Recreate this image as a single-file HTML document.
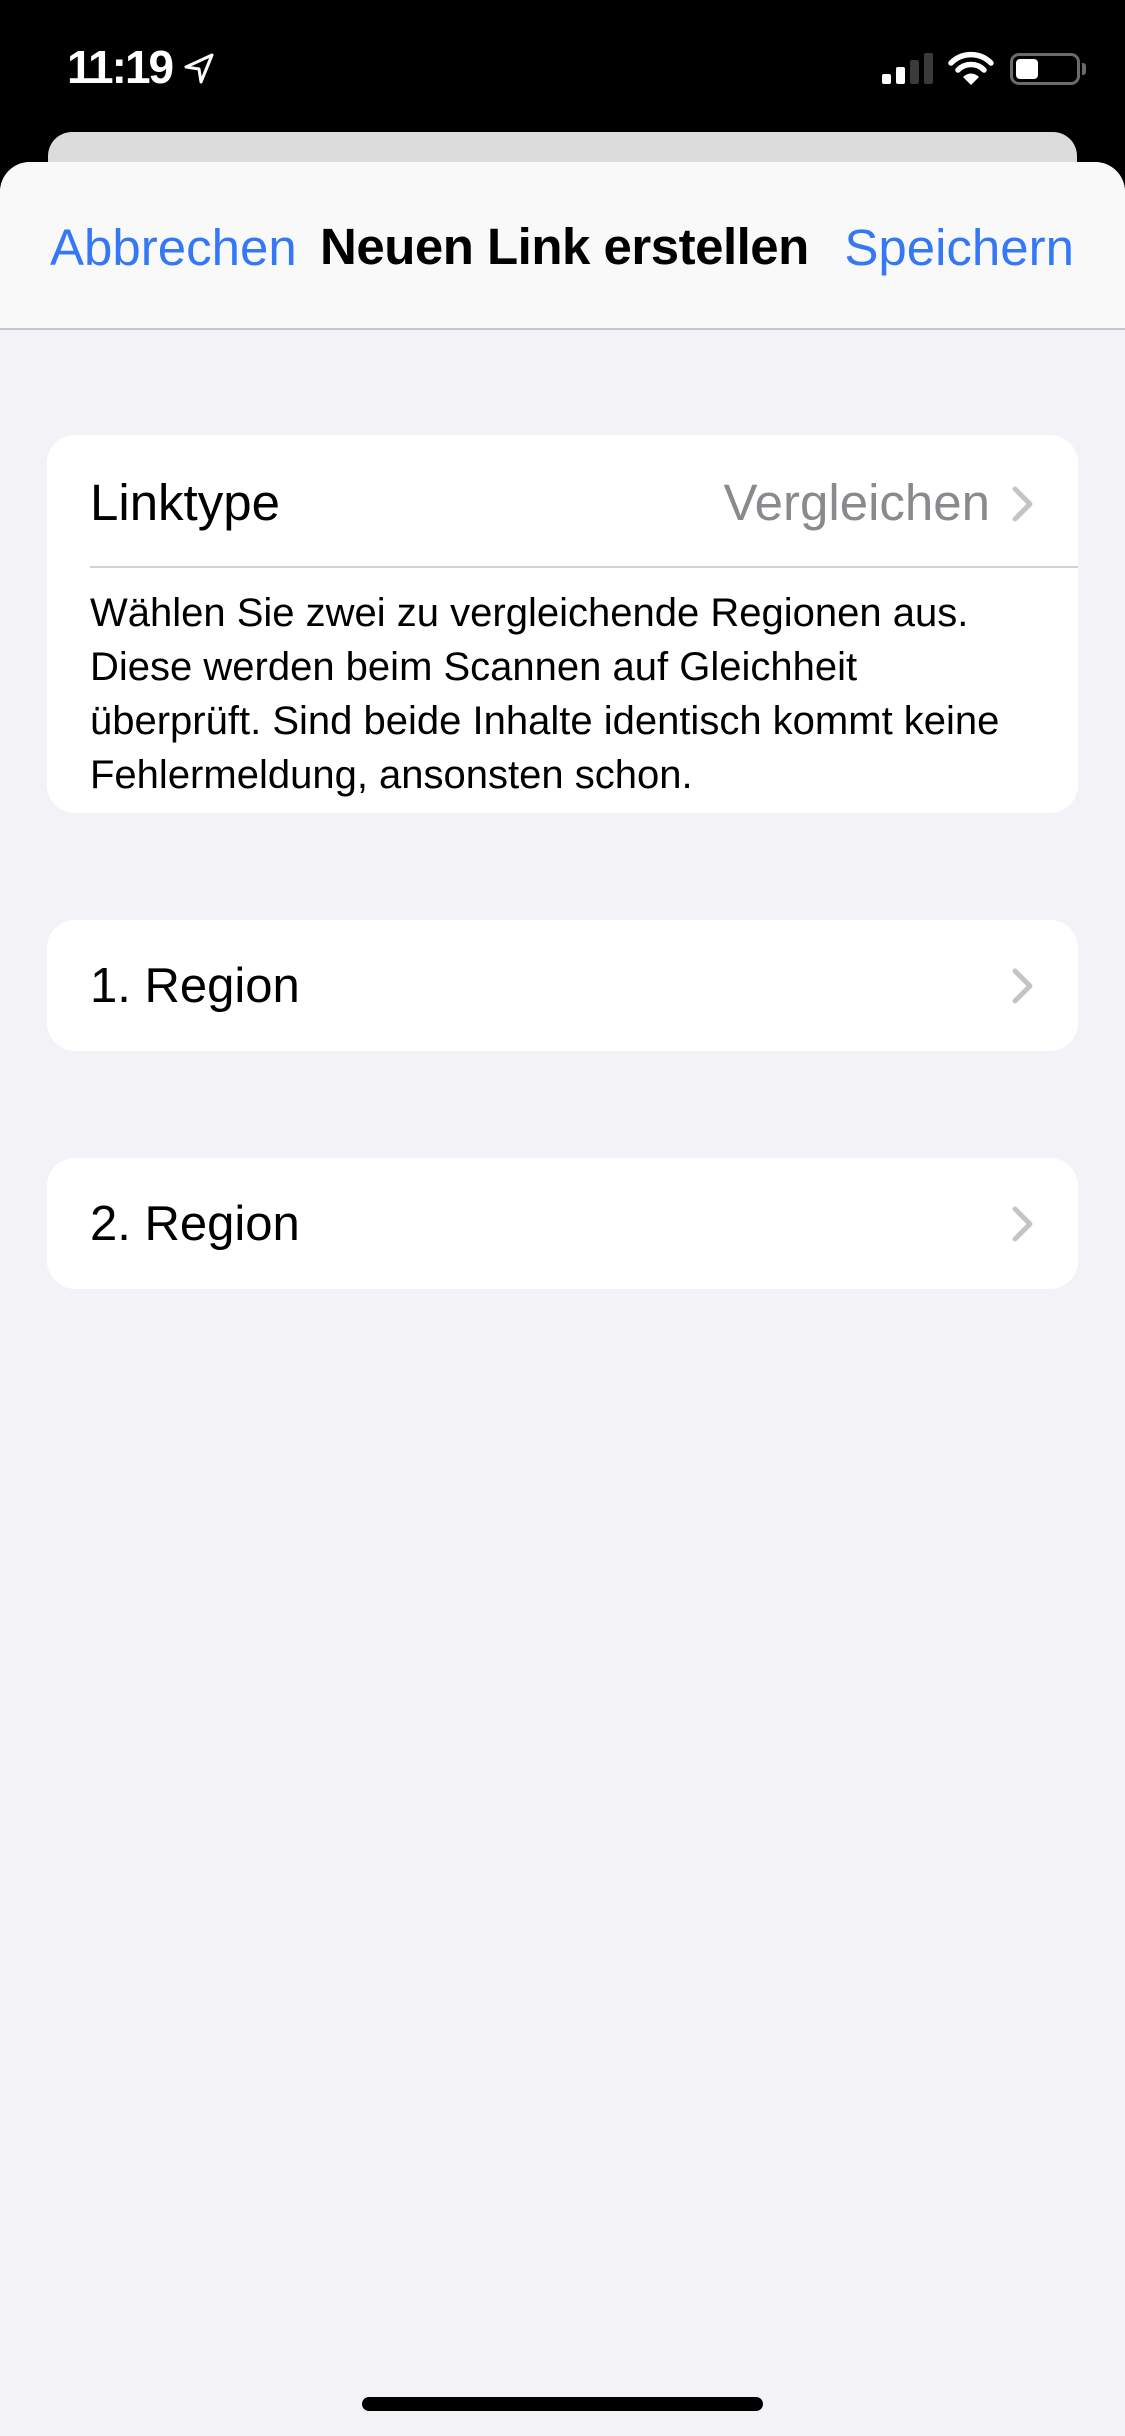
<!DOCTYPE html>
<html><head><meta charset="utf-8"><style>
*{margin:0;padding:0;box-sizing:border-box}
body{width:1125px;height:2436px;background:#000;font-family:"Liberation Sans",sans-serif;position:relative;overflow:hidden}
.abs{position:absolute}
.sheet{left:0;top:162px;width:1125px;height:2274px;background:#f2f2f7;border-radius:30px 30px 0 0;overflow:hidden}
.nav{left:0;top:0;width:1125px;height:168px;background:#f9f9f9;border-bottom:2px solid #c6c6c8}
.card{left:47px;width:1031px;background:#fff;border-radius:28px}
.t{white-space:nowrap;line-height:1}
.chev{position:absolute}
</style></head><body>
<div class="abs t" style="left:67px;top:44px;color:#fff;font-size:46px;font-weight:bold;letter-spacing:-2px">11:19</div>
<svg class="abs" style="left:182px;top:52px" width="34" height="34" viewBox="0 0 34 34"><path d="M30 3 L4 15 L17 17 L19 30 Z" fill="none" stroke="#fff" stroke-width="3" stroke-linejoin="round"/></svg>
<div class="abs" style="left:882px;top:74px;width:9px;height:10px;background:#fff;border-radius:2px"></div>
<div class="abs" style="left:896px;top:67px;width:9px;height:17px;background:#fff;border-radius:2px"></div>
<div class="abs" style="left:910px;top:60px;width:9px;height:24px;background:#3a3a3a;border-radius:2px"></div>
<div class="abs" style="left:924px;top:53px;width:9px;height:31px;background:#3a3a3a;border-radius:2px"></div>
<svg class="abs" style="left:948px;top:50px" width="46" height="36" viewBox="0 0 46 36"><path d="M3 13 A28 28 0 0 1 43 13" fill="none" stroke="#fff" stroke-width="5.5" stroke-linecap="round"/><path d="M10 20 A18 18 0 0 1 36 20" fill="none" stroke="#fff" stroke-width="5.5" stroke-linecap="round"/><path d="M15 27 L23 35 L31 27 A11 11 0 0 0 15 27Z" fill="#fff"/></svg>
<div class="abs" style="left:1010px;top:53px;width:70px;height:32px;border:3px solid #6b6b6b;border-radius:9px"></div>
<div class="abs" style="left:1016px;top:59px;width:22px;height:20px;background:#fff;border-radius:4px"></div>
<div class="abs" style="left:1082px;top:63px;width:4px;height:12px;background:#6b6b6b;border-radius:0 3px 3px 0"></div>
<div class="abs" style="left:48px;top:132px;width:1029px;height:60px;background:#dcdcdc;border-radius:24px 24px 0 0"></div>
<div class="abs sheet">
  <div class="abs nav">
    <div class="abs t" style="left:50px;top:60px;font-size:51px;color:#3478f6">Abbrechen</div>
    <div class="abs t" style="left:320px;top:59px;font-size:51px;font-weight:bold;color:#000;letter-spacing:-0.5px">Neuen Link erstellen</div>
    <div class="abs t" style="right:51px;top:60px;font-size:51px;color:#3478f6">Speichern</div>
  </div>
  <div class="abs card" style="top:273px;height:378px">
    <div class="abs t" style="left:43px;top:42px;font-size:51px;color:#000">Linktype</div>
    <div class="abs t" style="right:88px;top:42px;font-size:51px;color:#8a8a8e">Vergleichen</div>
    <svg class="chev" style="left:964px;top:50px" width="24" height="38" viewBox="0 0 24 38"><path d="M4 4 L19 19 L4 34" fill="none" stroke="#c4c4c7" stroke-width="5" stroke-linecap="round" stroke-linejoin="round"/></svg>
    <div class="abs" style="left:43px;top:131px;width:988px;height:2px;background:#d1d1d6"></div>
    <div class="abs" style="left:43px;top:151px;font-size:40px;line-height:54px;color:#000;width:990px;white-space:nowrap">Wählen Sie zwei zu vergleichende Regionen aus.<br>Diese werden beim Scannen auf Gleichheit<br>überprüft. Sind beide Inhalte identisch kommt keine<br>Fehlermeldung, ansonsten schon.</div>
  </div>
  <div class="abs card" style="top:758px;height:131px">
    <div class="abs t" style="left:43px;top:42px;font-size:49px;color:#000">1. Region</div>
    <svg class="chev" style="left:964px;top:47px" width="24" height="38" viewBox="0 0 24 38"><path d="M4 4 L19 19 L4 34" fill="none" stroke="#c4c4c7" stroke-width="5" stroke-linecap="round" stroke-linejoin="round"/></svg>
  </div>
  <div class="abs card" style="top:996px;height:131px">
    <div class="abs t" style="left:43px;top:42px;font-size:49px;color:#000">2. Region</div>
    <svg class="chev" style="left:964px;top:47px" width="24" height="38" viewBox="0 0 24 38"><path d="M4 4 L19 19 L4 34" fill="none" stroke="#c4c4c7" stroke-width="5" stroke-linecap="round" stroke-linejoin="round"/></svg>
  </div>
  <div class="abs" style="left:362px;top:2235px;width:401px;height:14px;background:#000;border-radius:7px"></div>
</div>
</body></html>
